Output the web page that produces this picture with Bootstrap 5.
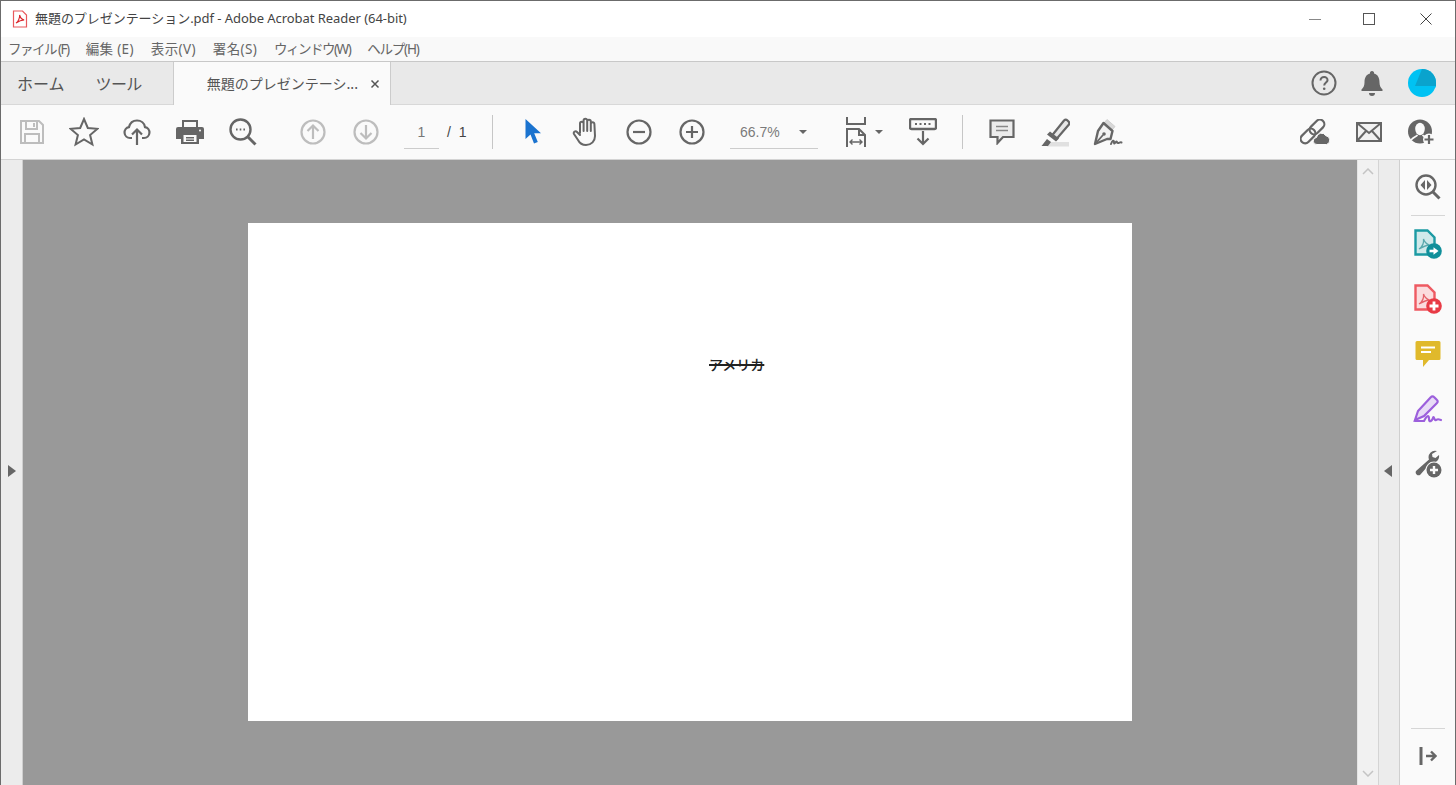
<!DOCTYPE html>
<html lang="ja">
<head>
  <meta charset="UTF-8">
  <title>無題のプレゼンテーション.pdf - Adobe Acrobat Reader (64-bit)</title>
  <link href="https://cdn.jsdelivr.net/npm/bootstrap@5.3.0/dist/css/bootstrap.min.css" rel="stylesheet">
  <style>
    html, body { height: 100%; overflow: hidden; }
    body { font-family: "Liberation Sans", "Noto Sans CJK JP", sans-serif; background: #fafafa; color: #555; }
    .app-frame { height: 785px; border-left: 1px solid #6b6b6b; border-top: 1px solid #6b6b6b; border-right: 1px solid #6b6b6b; }
    svg { display: block; flex: none; }

    .title-bar { height: 36px; background: #fff; padding-left: 10px; flex: none; }
    .title-text { font-family: "Noto Sans", "Noto Sans CJK JP", sans-serif; font-size: 13px; color: #444; margin-left: 6px; letter-spacing: -.05px; }
    .win-btn { width: 18px; height: 18px; }
    .win-max { margin-left: 36px; }
    .win-close { margin-left: 39px; margin-right: 20px; }

    .menu-bar { height: 24px; background: #f9f9f9; padding-left: 7px; gap: 17px; font-family: "Noto Sans", "Noto Sans CJK JP", sans-serif; font-size: 13.5px; color: #666; border-bottom: 1px solid #c8c8c8; box-sizing: content-box; flex: none; }
    .menu-kana { letter-spacing: -1.5px; }
    .menu-help { letter-spacing: -1.2px; }
    .menu-kanji { letter-spacing: .35px; }

    .tab-bar { height: 43px; background: #e9e9e9; border-bottom: 1px solid #d8d8d8; font-family: "Noto Sans CJK JP", sans-serif; flex: none; }
    .tab-link { font-size: 16px; color: #555; }
    .tab-second { margin-left: 31px; letter-spacing: -.6px; }
    .tab-active { width: 218px; height: 43px; background: #fafafa; border-left: 1px solid #ccc; border-right: 1px solid #ccc; margin-left: 31px; padding-left: 33px; margin-bottom: -1px; font-size: 14px; color: #555; }
    .tab-close { margin-left: 12px; }
    .tab-tools { gap: 23px; padding-right: 18px; }

    .tool-bar { height: 54px; background: #fafafa; padding-left: 18px; padding-right: 20px; border-bottom: 1px solid #d4d4d4; box-sizing: content-box; flex: none; }
    .tool-slot { width: 53px; flex: none; display: flex; justify-content: center; }
    .tool-first { width: 26px; justify-content: flex-start; }
    .tool-star { margin-left: 12px; }
    .tool-nav-a { margin-left: 17px; }
    .page-field { width: 35px; height: 34px; border-bottom: 1px solid #ccc; font-size: 14px; color: #777; text-align: center; line-height: 34px; margin-left: 12px; }
    .page-total { font-size: 14px; color: #444; margin-left: 8px; width: 45px; }
    .tool-sep { width: 1px; height: 34px; background: #c6c6c6; flex: none; }
    .tool-cursor { margin-left: 13px; }
    .zoom-field { width: 88px; height: 34px; border-bottom: 1px solid #ccc; font-size: 14px; color: #7a7a7a; line-height: 34px; padding-left: 10px; margin-left: 12px; }
    .zoom-caret { margin-right: 11px; }
    .caret-down { width: 0; height: 0; border-left: 4px solid transparent; border-right: 4px solid transparent; border-top: 4px solid #666; }
    .tool-fit { margin-left: 27px; }
    .tool-stamp { margin-left: 26px; }
    .tool-sep-b { margin-left: 25px; }
    .tool-comment { margin-left: 12px; }
    .tool-right { gap: 26px; }

    .work-area { flex: 1; min-height: 0; }
    .left-strip { width: 22px; flex: none; background: #ececec; border-right: 1px solid #cfcfcf; padding-top: 305px; padding-left: 7px; }
    .page-canvas { flex: 1; background: #999; padding-top: 63px; }
    .pdf-sheet { width: 884px; height: 498px; background: #fff; margin: 0 auto; position: relative; }
    .pdf-word { position: absolute; left: 461px; top: 131px; font-size: 14px; font-weight: 500; line-height: 20px; color: #222; font-family: "Noto Sans CJK JP", sans-serif; text-decoration: line-through; text-decoration-thickness: 1.5px; }
    .scroll-track { width: 21px; flex: none; background: #f1f1f1; border-left: 1px solid #e4e4e4; }
    .right-strip { width: 22px; flex: none; background: #ececec; border-left: 1px solid #d4d4d4; border-right: 1px solid #cfcfcf; padding-top: 305px; padding-left: 5px; }
    .side-panel { width: 55px; flex: none; background: #fafafa; padding-top: 14px; }
    .side-rule { width: 34px; height: 1px; background: #d6d6d6; flex: none; }
    .side-rule-top { margin-top: 15px; }
    .side-icon { height: 55px; flex: none; }
    .side-collapse { margin: 18px 0 20px; }
  </style>
</head>
<body>
<div class="app-frame d-flex flex-column">

  <div class="title-bar d-flex align-items-center">
    <svg width="18" height="18" viewBox="0 0 18 18"><path d="M2.500 1h9l4 4v12h-13z" fill="#fff" stroke="#e8585c" stroke-width="1.200"/><path d="M5 13c2-1 4-5 3.600-8 .8 3 2.200 4.500 4.600 5-2.500 0-5 .8-8.200 3z" fill="none" stroke="#d9252b" stroke-width="1.100"/></svg>
    <span class="title-text">無題のプレゼンテーション.pdf - Adobe Acrobat Reader (64-bit)</span>
    <div class="ms-auto d-flex align-items-center">
      <svg class="win-btn" viewBox="0 0 18 18"><path d="M3 9.500h12" stroke="#888" stroke-width="1"/></svg>
      <svg class="win-btn win-max" viewBox="0 0 18 18"><rect x="3.500" y="3.500" width="11" height="11" fill="none" stroke="#555"/></svg>
      <svg class="win-btn win-close" viewBox="0 0 18 18"><path d="M3.500 3.500l11 11M14.500 3.500l-11 11" stroke="#444" stroke-width="1"/></svg>
    </div>
  </div>

  <div class="menu-bar d-flex align-items-center">
    <span class="menu-kana">ファイル (F)</span><span class="menu-kanji">編集 (E)</span><span class="menu-kanji">表示(V)</span><span class="menu-kanji">署名(S)</span><span class="menu-kana">ウィンドウ(W)</span><span class="menu-help">ヘルプ(H)</span>
  </div>

  <div class="tab-bar d-flex align-items-center">
    <span class="tab-link ms-3">ホーム</span>
    <span class="tab-link tab-second">ツール</span>
    <div class="tab-active d-flex align-items-center">
      <span>無題のプレゼンテーシ...</span>
      <svg class="tab-close" width="10" height="10" viewBox="0 0 10 10"><path d="M1.500 1.500l7 7M8.500 1.500l-7 7" stroke="#555" stroke-width="1.500"/></svg>
    </div>
    <div class="tab-tools ms-auto d-flex align-items-center">
      <svg width="26" height="26" viewBox="0 0 26 26"><circle cx="13" cy="13" r="11.500" fill="none" stroke="#666" stroke-width="2"/><path d="M9.500 10.500c0-5 7.500-4.500 7 0-.3 2-3.300 2.300-3.300 5" fill="none" stroke="#666" stroke-width="2"/><circle cx="13.200" cy="18.800" r="1.300" fill="#666"/></svg>
      <svg width="24" height="26" viewBox="0 0 24 26"><path d="M12 1a2 2 0 0 1 2 2.500c4 1 5.500 4.500 5.500 9 0 3 1 5 3 7v1.500h-21V19.500c2-2 3-4 3-7 0-4.500 1.500-8 5.500-9A2 2 0 0 1 12 1z" fill="#666"/><path d="M9 23h6a3 3 0 0 1-6 0z" fill="#666"/></svg>
      <svg width="30" height="30" viewBox="0 0 30 30"><circle cx="15" cy="15" r="14" fill="#00c2f3"/><path d="M15 1c8 0 14 6 14 14v3H8z" fill="#0aa3cd"/><path d="M29 18a14 14 0 0 1-1 2H15l-2-2z" fill="#00c2f3"/></svg>
    </div>
  </div>

  <div class="tool-bar d-flex align-items-center">
    <div class="tool-slot tool-first">
      <svg width="26" height="26" viewBox="0 0 26 26" fill="none" stroke="#bdbdbd" stroke-width="2"><path d="M2 2h18l4 4v18H2z"/><path d="M7 2v8h11V2M15 4v4M6 24v-9h14v9"/></svg>
    </div>
    <div class="tool-slot tool-star">
      <svg width="30" height="30" viewBox="0 0 30 30"><path d="M15 2l3.800 9 9.700.8-7.400 6.300 2.300 9.400L15 22.500 6.600 27.500l2.300-9.400L1.500 11.800l9.700-.8z" fill="none" stroke="#666" stroke-width="2"/></svg>
    </div>
    <div class="tool-slot">
      <svg width="28" height="28" viewBox="0 0 28 28" fill="none" stroke="#666" stroke-width="2.200"><path d="M9 20H7a5.500 5.500 0 0 1-1-10.900C7 5 10 2.500 14 2.500s7.500 2.500 8 6.600A5.500 5.500 0 0 1 21 20h-2"/><path d="M14 27V12M9 16.500l5-5 5 5"/></svg>
    </div>
    <div class="tool-slot">
      <svg width="28" height="26" viewBox="0 0 28 26"><path d="M6 1h16v7h4a2 2 0 0 1 2 2v10h-5v5H5v-5H0V10a2 2 0 0 1 2-2h4z" fill="#666"/><path d="M8 3h12v5H8z" fill="#fafafa"/><path d="M7.500 16h13v7h-13z" fill="#fafafa"/><path d="M10 18h8v1.500h-8zM10 20.500h8V22h-8z" fill="#666"/><circle cx="24" cy="11.500" r="1" fill="#fafafa"/></svg>
    </div>
    <div class="tool-slot">
      <svg width="28" height="28" viewBox="0 0 28 28" fill="none" stroke="#666"><circle cx="11.500" cy="11.500" r="10" stroke-width="2.400"/><path d="M18.500 18.500l8 8" stroke-width="3"/><path d="M7 11.500h1.600M10.700 11.500h1.600M14.400 11.500H16" stroke-width="2"/></svg>
    </div>
    <div class="tool-slot tool-nav-a">
      <svg width="26" height="26" viewBox="0 0 26 26" fill="none" stroke="#bdbdbd" stroke-width="2.200"><circle cx="13" cy="13" r="11.500"/><path d="M13 20V7M7.500 12L13 6.500 18.500 12"/></svg>
    </div>
    <div class="tool-slot">
      <svg width="26" height="26" viewBox="0 0 26 26" fill="none" stroke="#bdbdbd" stroke-width="2.200"><circle cx="13" cy="13" r="11.500"/><path d="M13 6v13M7.500 14l5.500 5.500 5.500-5.500"/></svg>
    </div>
    <div class="page-field">1</div>
    <div class="page-total">/&nbsp;&nbsp;1</div>
    <div class="tool-sep"></div>
    <div class="tool-slot tool-cursor">
      <svg width="18" height="26" viewBox="0 0 18 26"><path d="M1.500 0v20l5-4.500 3.500 9 3.800-1.600-3.600-8.600H17z" fill="#1b73cf"/></svg>
    </div>
    <div class="tool-slot">
      <svg width="28" height="30" viewBox="0 0 28 30" fill="none" stroke="#666" stroke-width="2" stroke-linecap="round"><path d="M8 16V6.500a1.800 1.800 0 0 1 3.600 0V14M11.600 14V3.500a1.800 1.800 0 0 1 3.600 0V14M15.200 14V4.500a1.800 1.800 0 0 1 3.600 0V14M18.800 14V7a1.800 1.800 0 0 1 3.600 0l.6 12c0 5-3.500 9-9 9-4 0-6.500-2-8-5l-4-6c-1-2 1.500-3.500 3-2l3 3"/></svg>
    </div>
    <div class="tool-slot">
      <svg width="26" height="26" viewBox="0 0 26 26" fill="none" stroke="#666" stroke-width="2.200"><circle cx="13" cy="13" r="11.500"/><path d="M7 13h12"/></svg>
    </div>
    <div class="tool-slot">
      <svg width="26" height="26" viewBox="0 0 26 26" fill="none" stroke="#666" stroke-width="2.200"><circle cx="13" cy="13" r="11.500"/><path d="M7 13h12M13 7v12"/></svg>
    </div>
    <div class="zoom-field d-flex align-items-center">
      <span>66.7%</span><span class="caret-down ms-auto zoom-caret"></span>
    </div>
    <div class="tool-fit d-flex align-items-center">
      <svg width="22" height="30" viewBox="0 0 22 30" fill="none" stroke="#666" stroke-width="2"><path d="M2 0v7h18V0M2 30V12h12l6 6v12"/><path d="M14 12v6h6"/><path d="M5 25h12M7.500 22.500L5 25l2.500 2.500M14.500 22.500L17 25l-2.500 2.500" stroke-width="1.400"/></svg>
      <span class="caret-down ms-2"></span>
    </div>
    <div class="tool-stamp">
      <svg width="28" height="28" viewBox="0 0 28 28"><rect x="1" y="1" width="26" height="10" rx="1.500" fill="none" stroke="#666" stroke-width="2.400"/><path d="M6 5h2v2H6zM10.500 5h2v2h-2zM15 5h2v2h-2zM19.500 5h2v2h-2z" fill="#666"/><path d="M14 13v13M8.500 20.500L14 26l5.500-5.500" fill="none" stroke="#666" stroke-width="2.200"/></svg>
    </div>
    <div class="tool-sep tool-sep-b"></div>
    <div class="tool-slot tool-comment">
      <svg width="26" height="26" viewBox="0 0 26 26"><path d="M1.500 1.500h23v16.500H14l-5.500 6v-6h-7z" fill="#ececec" stroke="#666" stroke-width="2.200"/><path d="M7 7.500h12M7 11.500h12" stroke="#888" stroke-width="1.400"/></svg>
    </div>
    <div class="tool-slot">
      <svg width="30" height="30" viewBox="0 0 30 30"><path d="M7 25h22v4.500H7z" fill="#e0e0e0"/><path d="M12 18.500L24 3.500a2.500 2.500 0 0 1 3.500 0l1 1a2.500 2.500 0 0 1 0 3.500L16.500 22z" fill="#e8e8e8" stroke="#666" stroke-width="2.200"/><path d="M7 18l3-3 9 7-3 3z" fill="#666" transform="translate(0 -.5)"/><path d="M1.500 29l5.500-7 4 3-3 4z" fill="#666"/></svg>
    </div>
    <div class="tool-slot">
      <svg width="30" height="30" viewBox="0 0 30 30"><path d="M14 2.500l8 7-3 3.500-8-7z" fill="#d8d8d8" stroke="#d0d0d0"/><path d="M10.500 6l9 8-2 8H14l-12 5 3-13z" fill="#f2f2f2" stroke="#666" stroke-width="2.400" stroke-linejoin="round"/><path d="M3 26l7-8" stroke="#666" stroke-width="1.800"/><circle cx="11" cy="17" r="1.800" fill="#666"/><path d="M18 27c1.500-4 3-4 3-1.500s2-1 2.500-1 .5 2 2 1.500 2-1 3-.5" fill="none" stroke="#666" stroke-width="2" stroke-linecap="round"/></svg>
    </div>
    <div class="ms-auto d-flex align-items-center tool-right">
      <svg width="30" height="26" viewBox="0 0 30 26" fill="none" stroke="#666" stroke-width="2.200"><rect x="-.5" y="12.500" width="17" height="9" rx="4.500" transform="rotate(-45 8 17)"/><rect x="8.500" y="3.500" width="17" height="9" rx="4.500" transform="rotate(-45 17 8)"/><path d="M17 25.500a3.500 3.500 0 0 1-.5-7 5 5 0 0 1 9.300-1.800 4.500 4.500 0 0 1 .7 8.800z" fill="#666" stroke="#fafafa" stroke-width="1"/></svg>
      <svg width="26" height="20" viewBox="0 0 26 20" fill="none" stroke="#666" stroke-width="2"><rect x="1" y="1" width="24" height="18" fill="#f2f2f2"/><path d="M1 1l12 10L25 1M1 19l9-10M25 19l-9-10"/></svg>
      <svg width="27" height="26" viewBox="0 0 27 26"><circle cx="12" cy="12.500" r="12" fill="#666"/><ellipse cx="12" cy="10" rx="4.800" ry="6.200" fill="#fafafa"/><path d="M3 21c3-3.500 5-3 6.500-5M21 21c-3-3.500-5-3-6.500-5" fill="none" stroke="#fafafa" stroke-width="1.600"/><circle cx="21" cy="20.500" r="6" fill="#fafafa"/><path d="M21 16v9M16.500 20.500h9" stroke="#666" stroke-width="2.200"/></svg>
    </div>
  </div>

  <div class="work-area d-flex">
    <div class="left-strip">
      <svg width="8" height="12" viewBox="0 0 8 12"><path d="M0 0l8 6-8 6z" fill="#666"/></svg>
    </div>
    <div class="page-canvas">
      <div class="pdf-sheet"><span class="pdf-word">アメリカ</span></div>
    </div>
    <div class="scroll-track d-flex flex-column justify-content-between align-items-center py-2">
      <svg width="12" height="7" viewBox="0 0 12 7"><path d="M1 6l5-5 5 5" fill="none" stroke="#c4c4c4" stroke-width="1.500"/></svg>
      <svg width="12" height="7" viewBox="0 0 12 7"><path d="M1 1l5 5 5-5" fill="none" stroke="#c4c4c4" stroke-width="1.500"/></svg>
    </div>
    <div class="right-strip">
      <svg width="8" height="12" viewBox="0 0 8 12"><path d="M8 0L0 6l8 6z" fill="#666"/></svg>
    </div>
    <div class="side-panel d-flex flex-column align-items-center">
      <svg width="26" height="26" viewBox="0 0 26 26"><circle cx="11" cy="11" r="9.500" fill="none" stroke="#666" stroke-width="2.400"/><path d="M17.500 17.500l7 7" stroke="#666" stroke-width="3"/><path d="M10 6v10l-4.500-5zM12 6v10l4.500-5z" fill="#666"/></svg>
      <div class="side-rule side-rule-top"></div>
      <div class="side-icon d-flex align-items-center">
        <svg width="28" height="30" viewBox="0 0 28 30"><path d="M1.500 1.500h12l7 7v17h-19z" fill="#cfe9ea" stroke="#1b9aa3" stroke-width="2.400"/><path d="M5 20c3-2 5-6 4.500-10 1 3 3 5 6 6-3 0-6 1.500-10.500 4z" fill="none" stroke="#5aa9ad" stroke-width="1.300"/><circle cx="20" cy="22" r="7.800" fill="#0f8f9a"/><path d="M15.500 22h7" stroke="#fff" stroke-width="2.600"/><path d="M19.500 18.200L24.500 22l-5 3.800z" fill="#fff"/></svg>
      </div>
      <div class="side-icon d-flex align-items-center">
        <svg width="28" height="30" viewBox="0 0 28 30"><path d="M1.500 1.500h12l7 7v17h-19z" fill="#fbdcde" stroke="#ee5a62" stroke-width="2.400"/><path d="M5 20c3-2 5-6 4.500-10 1 3 3 5 6 6-3 0-6 1.500-10.500 4z" fill="none" stroke="#e4636a" stroke-width="1.300"/><circle cx="20" cy="22" r="7.800" fill="#e83a45"/><path d="M15.500 22h9M20 17.500v9" fill="none" stroke="#fff" stroke-width="2.800"/></svg>
      </div>
      <div class="side-icon d-flex align-items-center">
        <svg width="26" height="28" viewBox="0 0 26 28"><path d="M2 1h22a1.500 1.500 0 0 1 1.500 1.500v16A1.500 1.500 0 0 1 24 20H14l-6 7v-7H2A1.500 1.500 0 0 1 .5 18.500v-16A1.500 1.500 0 0 1 2 1z" fill="#e0b92b"/><path d="M6 7.500h14M6 12h10" stroke="#fff" stroke-width="2"/></svg>
      </div>
      <div class="side-icon d-flex align-items-center">
        <svg width="30" height="28" viewBox="0 0 30 28" fill="none" stroke="#9c5fdc" stroke-width="2.200"><path d="M2 25l3-9L18 2a2 2 0 0 1 3 0l3 3a2 2 0 0 1 0 3L11 21z" fill="#e8dcf6"/><path d="M2 26h9c3-6 5-6 5-2s3 2 4-1 1 3 3 2 2-1 5 0" stroke-linecap="round"/></svg>
      </div>
      <div class="side-icon d-flex align-items-center">
        <svg width="28" height="28" viewBox="0 0 28 28"><path d="M23 1a6.500 6.500 0 0 0-8 8.500L2 21a3 3 0 0 0 4 4l11-12.500A6.500 6.500 0 0 0 25 5l-3.500 3-3-1-.5-3z" fill="#666"/><circle cx="20" cy="20" r="8.500" fill="#fafafa"/><circle cx="20" cy="20" r="7.500" fill="#666"/><path d="M16 20h8M20 16v8" stroke="#fafafa" stroke-width="2.400"/></svg>
      </div>
      <div class="side-rule mt-auto"></div>
      <div class="side-collapse">
        <svg width="18" height="18" viewBox="0 0 18 18"><path d="M2 0v18" stroke="#666" stroke-width="3"/><path d="M7 9h9M12 4.500L16.500 9 12 13.500" fill="none" stroke="#666" stroke-width="2.400"/></svg>
      </div>
    </div>
  </div>
</div>
</body>
</html>
